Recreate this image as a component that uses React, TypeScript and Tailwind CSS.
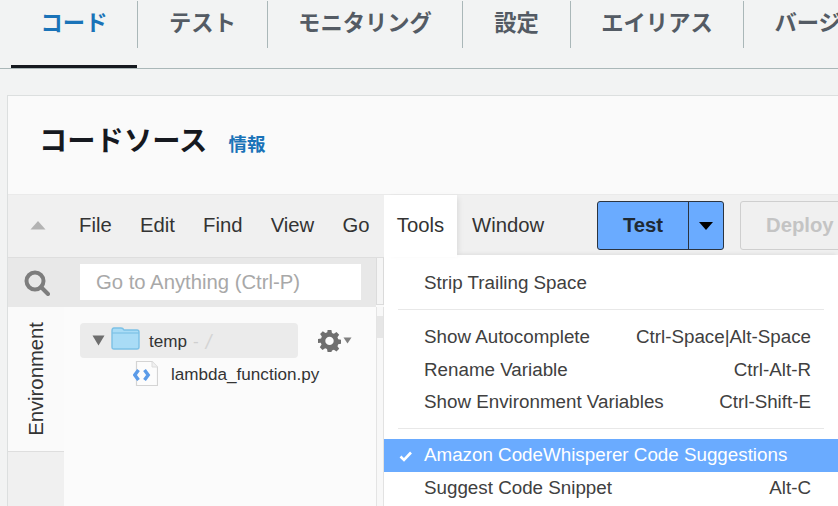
const cjk = '"Noto Sans CJK JP", "Noto Sans", sans-serif';

const tabs = [
  { label: "コード", w: "w-[127px]", active: true },
  { label: "テスト", w: "w-[130px]" },
  { label: "モニタリング", w: "w-[195px]" },
  { label: "設定", w: "w-[108px]" },
  { label: "エイリアス", w: "w-[173px]" },
  { label: "バージョン", w: "w-[173px]" },
];

function Tab({ label, w, active }: { label: string; w: string; active?: boolean }) {
  return (
    <div className={`relative h-[68px] shrink-0 ${w} pt-[1px]`}>
      <div
        className={`flex h-[47px] items-center justify-center border-r border-[#aab7b8] pb-[6px] text-[22.3px] font-bold leading-none ${
          active ? "text-[#1a73b8]" : "text-[#545b64]"
        }`}
      >
        <span className="whitespace-nowrap">{label}</span>
      </div>
      {active && <div className="absolute bottom-0 left-0 right-[1px] h-[3px] bg-[#16191f]" />}
    </div>
  );
}

function MenuItem({ label, shortcut, checked }: { label: string; shortcut?: string; checked?: boolean }) {
  return (
    <div
      className={`relative flex h-[32.5px] items-center justify-between pl-[40px] pr-[27px] text-[18.8px] ${
        checked ? "bg-[#6aabff] text-white" : "text-[#404040]"
      }`}
    >
      {checked && (
        <svg className="absolute left-[15px] top-[12px]" width="14" height="11" viewBox="0 0 14 11">
          <path d="M1.5 5.5 L5 9 L12 1.5" fill="none" stroke="#fff" strokeWidth="2.6" />
        </svg>
      )}
      <span className="whitespace-nowrap">{label}</span>
      {shortcut && <span className="whitespace-nowrap">{shortcut}</span>}
    </div>
  );
}

export default function App() {
  return (
    <div
      className="relative h-[506px] w-[838px] overflow-hidden bg-[#f2f3f3]"
      style={{ fontFamily: '"Liberation Sans", Arial, sans-serif' }}
    >
      {/* Tabs */}
      <div className="h-[69px] overflow-hidden border-b border-[#aab7b8] pl-[11px]" style={{ fontFamily: cjk }}>
        <div className="flex">
          {tabs.map((t) => (
            <Tab key={t.label} {...t} />
          ))}
        </div>
      </div>

      {/* Card */}
      <div className="ml-[7px] mt-[26px] h-[411px] border-l border-t border-[#dcdfdf] bg-[#fafafa]">
        <div className="flex h-[98px] items-center pb-[12px] pl-[31px]" style={{ fontFamily: cjk }}>
          <span className="text-[28.3px] font-bold leading-none text-[#16191f]">コードソース</span>
          <span className="ml-[21px] mt-[9px] text-[18.5px] font-bold leading-none text-[#1a73b8]">情報</span>
        </div>

        {/* IDE */}
        <div className="border-t border-[#eaeaea]">
          {/* Menu bar */}
          <div className="flex h-[63px] items-center border-b border-[#dedede] bg-[#f0f0f0] pb-[2px] text-[20.3px] text-[#333]">
            <div className="flex w-[59px] shrink-0 justify-center pl-[1px]">
              <svg width="16" height="10" viewBox="0 0 16 10">
                <path d="M8 1 L15.5 9.5 H0.5 Z" fill="#b3b3b3" />
              </svg>
            </div>
            <div className="flex w-[317px] shrink-0 gap-[28.2px] pl-[12px]">
              <span>File</span>
              <span>Edit</span>
              <span>Find</span>
              <span>View</span>
              <span>Go</span>
            </div>
          </div>

          <div className="flex h-[249px]">
            {/* Left rail */}
            <div className="flex w-[56px] shrink-0 flex-col">
              <div className="flex h-[49px] items-center justify-center bg-[#e8e8e8] pl-[2px]">
                <svg width="26" height="26" viewBox="0 0 26 26">
                  <circle cx="11" cy="11" r="8.5" fill="none" stroke="#7d7d7d" strokeWidth="4" />
                  <path d="M17 17 L24 24" stroke="#7d7d7d" strokeWidth="4" strokeLinecap="round" />
                </svg>
              </div>
              <div className="flex h-[145px] items-center justify-center border-b border-[#dedede] bg-[#fafafa]">
                <span className="rotate-180 text-[20.3px] leading-none text-[#333] [writing-mode:vertical-rl]">
                  Environment
                </span>
              </div>
              <div className="flex-1 bg-[#f0f0f0]" />
            </div>

            {/* Tree */}
            <div className="flex w-[312px] shrink-0 flex-col bg-[#fbfbfb]">
              <div className="h-[49px] bg-[#e8e8e8] pl-[16px] pt-[6px]">
                <div className="flex h-[36px] w-[281px] items-center bg-white pl-[16px] text-[20.3px] text-[#a8a8a8]">
                  Go to Anything (Ctrl-P)
                </div>
              </div>
              <div className="flex items-center pl-[16px] pt-[16px]">
                <div className="flex h-[35px] w-[218px] items-center rounded-[4px] bg-[#ebebeb] pl-[12px]">
                  <svg width="13" height="11" viewBox="0 0 13 11">
                    <path d="M0.5 0.5 H12.5 L6.5 10.5 Z" fill="#6e6e6e" />
                  </svg>
                  <svg className="mb-[5px] ml-[6px]" width="29" height="23" viewBox="0 0 29 23">
                    <path
                      d="M1 4 Q1 1 3 1 H10 Q12 1 13 3 H26 Q28 3 28 5 V20 Q28 22 26 22 H3 Q1 22 1 20 Z"
                      fill="#a9dcf6"
                      stroke="#7cc1e6"
                      strokeWidth="1.4"
                    />
                    <path d="M1 6 H28" stroke="#7cc1e6" strokeWidth="1.2" />
                  </svg>
                  <span className="ml-[9px] pt-[2px] text-[17.1px] text-[#333]">temp</span>
                  <span className="ml-[6px] pt-[2px] text-[17px] text-[#cfcfcf]">-</span>
                  <span className="ml-[7px] pt-[2px] text-[20px] italic text-[#d4d4d4]">/</span>
                </div>
                <svg className="ml-[20px]" width="23" height="23" viewBox="0 0 24 24">
                  <path
                    fill="#6f6f6f"
                    fillRule="evenodd"
                    d="M10 1h4l.6 3.2 2 .8 2.7-1.8 2.8 2.8-1.8 2.7.8 2 3.2.6v4l-3.2.6-.8 2 1.8 2.7-2.8 2.8-2.7-1.8-2 .8L14 24h-4l-.6-3.2-2-.8-2.7 1.8-2.8-2.8 1.8-2.7-.8-2L0 14.5v-4l3.2-.6.8-2L2.2 5.2 5 2.4l2.7 1.8 2-.8z M12 8a4.4 4.4 0 1 0 0 8.8A4.4 4.4 0 0 0 12 8z"
                  />
                </svg>
                <svg className="ml-[2px]" width="9" height="7" viewBox="0 0 9 7">
                  <path d="M0.5 0.5 H8.5 L4.5 6.5 Z" fill="#808080" />
                </svg>
              </div>
              <div className="flex items-center pl-[69px] pt-[2px]">
                <svg width="25" height="25" viewBox="0 0 25 25">
                  <path d="M3.5 0.5 H19 L24.5 6 V24.5 H3.5 Z" fill="#fcfcfc" stroke="#d4d4d4" strokeWidth="1.2" />
                  <path d="M19 0.5 V6 H24.5" fill="#f0f0f0" stroke="#dcdcdc" strokeWidth="1" />
                  <path d="M5.5 9 L1.8 14 L5.5 19" fill="none" stroke="#5b9be8" strokeWidth="3.4" />
                  <path d="M11.5 9 L15.2 14 L11.5 19" fill="none" stroke="#5b9be8" strokeWidth="3.4" />
                </svg>
                <span className="ml-[13px] pt-[2px] text-[17.1px] text-[#333]">lambda_function.py</span>
              </div>
            </div>

            {/* Scroll strip beside the tree */}
            <div className="flex w-[8px] shrink-0 flex-col">
              <div className="h-[47px] border-x border-b border-[#dcdcdc] bg-[#f5f5f5]" />
              <div className="mt-[2px] flex-1 border-x border-[#e4e4e4] bg-[#f8f8f8] pt-[9px]">
                <div className="h-[22px] bg-[#e6e6e6]" />
              </div>
            </div>
          </div>
        </div>
      </div>

      {/* Right side of menu bar + open menu */}
      <div className="absolute left-[384px] right-0 top-[195px]">
        <div className="flex h-[60px] items-start bg-[#f0f0f0] text-[20.3px] text-[#333]">
          <div className="relative z-10 flex h-[62px] w-[73px] shrink-0 items-center justify-center bg-white pb-[2px] shadow-[4px_0_6px_-3px_rgba(0,0,0,0.1)]">
            Tools
          </div>
          <div className="flex h-[60px] w-[140px] shrink-0 items-center pl-[15px]">Window</div>
          <div className="mt-[6px] flex h-[49px] w-[127px] shrink-0 overflow-hidden rounded-[3px] border border-[#2b3440] bg-[#6aabff] font-bold text-[#1f2933]">
            <div className="flex w-[91px] items-center justify-center border-r border-[#2b3440]">Test</div>
            <div className="flex flex-1 items-center justify-center">
              <svg width="14" height="8" viewBox="0 0 14 8">
                <path d="M0 0 H14 L7 8 Z" fill="#000" />
              </svg>
            </div>
          </div>
          <div className="ml-[16px] mt-[6px] flex h-[49px] w-[120px] shrink-0 items-center rounded-[3px] border border-[#cfcfcf] pl-[25px] font-bold text-[#c4c4c4]">
            Deploy
          </div>
        </div>
        <div className="relative h-[251px] bg-white pt-[12px] shadow-[0_-3px_4px_-2px_rgba(0,0,0,0.08)]">
          <div className="flex h-[33px] items-center pl-[40px] text-[18.8px] text-[#404040]">Strip Trailing Space</div>
          <div className="mx-[14px] mb-[11px] mt-[9px] h-px bg-[#e8e8e8]" />
          <MenuItem label="Show Autocomplete" shortcut="Ctrl-Space|Alt-Space" />
          <MenuItem label="Rename Variable" shortcut="Ctrl-Alt-R" />
          <MenuItem label="Show Environment Variables" shortcut="Ctrl-Shift-E" />
          <div className="mx-[14px] mb-[10px] mt-[9.5px] h-px bg-[#e8e8e8]" />
          <MenuItem label="Amazon CodeWhisperer Code Suggestions" checked />
          <MenuItem label="Suggest Code Snippet" shortcut="Alt-C" />
        </div>
      </div>
    </div>
  );
}
